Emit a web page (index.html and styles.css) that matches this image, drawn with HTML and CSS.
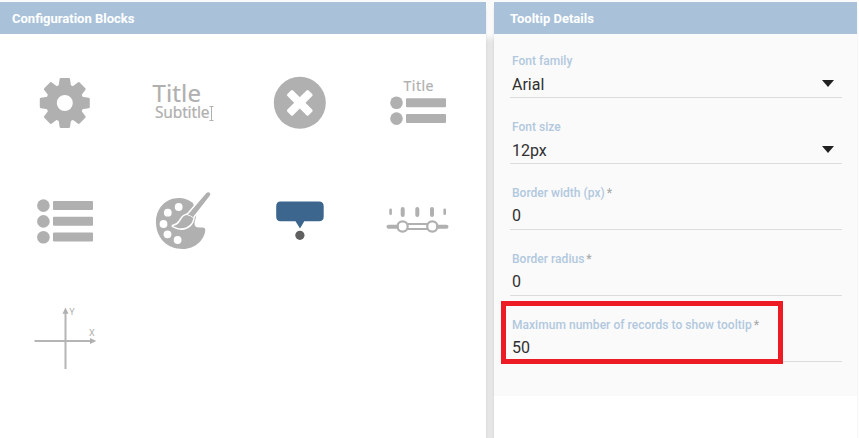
FILE: index.html
```html
<!DOCTYPE html>
<html lang="en">
<head>
<meta charset="utf-8">
<title>Configuration</title>
<link rel="stylesheet" href="styles.css">
</head>
<body>
<main class="workspace">
  <section class="panel blocks">
    <h2 class="panel-header">Configuration Blocks</h2>
    <div class="block-grid">
      <svg class="icon" viewBox="6 44 118 118">
        <defs><path id="tooth" d="M58.300 88 59.600 79Q59.800 78 60.800 78H68.800Q69.800 78 70 79L71.300 88Z"/></defs>
        <circle cx="64.800" cy="103" r="13.400" fill="none" stroke="#b0b0b0" stroke-width="10.800"/>
        <use href="#tooth"/>
        <use href="#tooth" transform="rotate(45 64.800 103)"/>
        <use href="#tooth" transform="rotate(90 64.800 103)"/>
        <use href="#tooth" transform="rotate(135 64.800 103)"/>
        <use href="#tooth" transform="rotate(180 64.800 103)"/>
        <use href="#tooth" transform="rotate(225 64.800 103)"/>
        <use href="#tooth" transform="rotate(270 64.800 103)"/>
        <use href="#tooth" transform="rotate(315 64.800 103)"/>
      </svg>
      <svg class="icon" viewBox="124 44 118 118">
        <text class="heading" x="152.500" y="102.300" font-size="24" textLength="48.500">Title</text>
        <text class="heading" x="155" y="118" font-size="15.500" textLength="54.500">Subtitle</text>
        <path class="line" d="M209.500 106.500H213.500M211.500 106.500V120.500M209.500 120.500H213.500"/>
      </svg>
      <svg class="icon" viewBox="242 44 118 118">
        <circle cx="299.800" cy="102.800" r="26"/>
        <g fill="#fff">
          <rect x="284.800" y="98.800" width="30" height="8" rx="1.500" transform="rotate(45 299.800 102.800)"/>
          <rect x="284.800" y="98.800" width="30" height="8" rx="1.500" transform="rotate(-45 299.800 102.800)"/>
        </g>
      </svg>
      <svg class="icon" viewBox="360 44 118 118">
        <text class="heading" x="403.500" y="91" font-size="14" textLength="30">Title</text>
        <circle cx="396.500" cy="102.800" r="6.300"/><rect x="406" y="98.200" width="40" height="9" rx="1"/>
        <circle cx="396.500" cy="118.600" r="6.300"/><rect x="406" y="114" width="40" height="9" rx="1"/>
      </svg>
      <svg class="icon" viewBox="6 162 118 118">
        <circle cx="43.400" cy="205.600" r="6.300"/><rect x="53" y="201" width="40" height="9" rx="1"/>
        <circle cx="43.400" cy="221.400" r="6.300"/><rect x="53" y="216.800" width="40" height="9" rx="1"/>
        <circle cx="43.400" cy="237.200" r="6.300"/><rect x="53" y="232.600" width="40" height="9" rx="1"/>
      </svg>
      <svg class="icon" viewBox="124 162 118 118">
        <path d="M193 203C188.500 199.500 184 198 179 198C165 198 156 209 156 222C156 238 167 249 183 249C195 249 204.500 240 205.300 230Q205.400 227.500 202.500 227.500H199C194.500 227.500 193.500 224 195.500 219L196.500 214Z"/>
        <g fill="#fff"><circle cx="178.700" cy="207" r="3.900"/><circle cx="167.800" cy="212.700" r="3.900"/><circle cx="163.500" cy="224" r="3.900"/><circle cx="167.500" cy="234.300" r="3.900"/><circle cx="177.600" cy="240" r="3.900"/></g>
        <path d="M173 226C179 225 180 221 182 218C183.500 215.500 186.500 215 188 214.500L206 193.500Q208 191.300 209.700 192.700Q211.200 194.200 209.500 196L193.500 216.500C193 220 192.500 222.500 190 224.800C185 229.500 178.500 229 173 226Z" stroke="#fff" stroke-width="3" paint-order="stroke" stroke-linejoin="round"/>
        <path d="M186.500 214.500Q191 215.500 193.700 218" fill="none" stroke="#fff" stroke-width=".8"/>
      </svg>
      <svg class="icon" viewBox="242 162 118 118">
        <path fill="#3c668d" d="M280.500 201.500H319Q323.700 201.500 323.700 206.200V216.500Q323.700 221.300 319 221.300H304.300L300 228.500 295.500 221.300H280.500Q276.200 221.300 276.200 216.500V206.200Q276.200 201.500 280.500 201.500Z"/>
        <circle cx="299.900" cy="235.300" r="4.600" fill="#606060"/>
      </svg>
      <svg class="icon" viewBox="360 162 118 118">
        <g fill="none" stroke="#b0b0b0" stroke-linecap="round">
          <path stroke-width="4" d="M402.700 209V215M417.300 209V215M432 209V215"/>
          <path stroke-width="2.600" d="M390.600 209.800V213.800M444.700 209.800V213.800"/>
          <path stroke-width="4" d="M388.500 226.700H397M438 226.700H446.500"/>
          <path stroke-width="2" d="M408 224H427M408 229H427"/>
          <circle cx="402.600" cy="226.500" r="5.100" stroke-width="2.200"/><circle cx="432.300" cy="226.500" r="5.100" stroke-width="2.200"/>
        </g>
      </svg>
      <svg class="icon" viewBox="6 280 118 118">
        <path d="M34.500 341H91M65.500 369V312" fill="none" stroke="#b5b5b5" stroke-width="2"/>
        <path d="M62.500 313.700 65.500 307.500 68.500 313.700ZM90 338 96.300 341 90 344Z"/>
        <text class="axis-label" x="69.200" y="315.300" font-size="9">Y</text>
        <text class="axis-label" x="89" y="336.300" font-size="9">X</text>
      </svg>
    </div>
  </section>
  <section class="panel details">
    <h2 class="panel-header">Tooltip Details</h2>
    <form class="fields">
      <div class="field select"><span class="label">Font family</span><span class="value">Arial</span></div>
      <div class="field select"><span class="label">Font size</span><span class="value">12px</span></div>
      <div class="field input"><span class="label">Border width (px)<i class="required">*</i></span><span class="value">0</span></div>
      <div class="field input"><span class="label">Border radius<i class="required">*</i></span><span class="value">0</span></div>
      <div class="field input highlighted"><span class="label wide">Maximum number of records to show tooltip<i class="required">*</i></span><span class="value">50</span></div>
    </form>
  </section>
</main>
</body>
</html>
```

FILE: styles.css
```css
*, *::after { box-sizing: border-box; }
body {
  margin: 0;
  height: 438px;
  overflow: hidden;
  background: #fff;
  font-family: Roboto, sans-serif;
}
.workspace {
  display: grid;
  grid-template-columns: 486px 363px;
  column-gap: 8px;
  width: 857px;
  height: 438px;
  padding-top: 2px;
  background: linear-gradient(#fafafa 34px, #e6e6e6 42px);
}
.panel { background: #fff; box-shadow: 0 6px 3px -1px rgba(0, 0, 0, .2); }
.panel-header {
  position: relative;
  height: 32px;
  margin: 0;
  padding-left: 12px;
  background: #a9c2da;
  color: #fff;
  font-size: 13px;
  font-weight: 700;
  line-height: 33px;
}
.details .panel-header { padding-left: 16px; }
.block-grid {
  display: grid;
  grid-template-columns: repeat(4, 118px);
  grid-auto-rows: 118px;
  padding: 10px 6px 0;
}
.icon {
  width: 118px;
  height: 118px;
  fill: #b0b0b0;
  font-family: "Noto Sans", sans-serif;
}
.heading { stroke: #b0b0b0; stroke-width: .2px; }
.line { fill: none; stroke: #b0b0b0; }
.axis-label { font-family: Roboto, sans-serif; }
.fields {
  height: 362px;
  padding: 14px 15px 0 16px;
  background: #fafafa;
}
.field {
  position: relative;
  display: flex;
  flex-direction: column;
  height: 50px;
  margin-bottom: 16px;
  padding: 5px 0 0 2px;
  border-bottom: 1px solid #dcdcdc;
}
.label {
  height: 16px;
  color: #b1c8de;
  font-size: 12px;
  font-weight: 500;
  line-height: 16px;
  letter-spacing: .02px;
}
.wide { letter-spacing: .04px; }
.required { margin-left: 2px; color: #aaa; font-style: normal; }
.value {
  padding-top: 4px;
  color: #303030;
  font-size: 16px;
  line-height: 24px;
}
.input .value { padding-top: 3px; }
.select::after {
  content: "";
  position: absolute;
  top: 32px;
  right: 8px;
  border: solid transparent;
  border-width: 7px 6px 0;
  border-top-color: #212121;
}
.highlighted::after {
  content: "";
  position: absolute;
  top: -11px;
  left: -9px;
  width: 282px;
  height: 63px;
  border: 5px solid #ed1c24;
}
```
